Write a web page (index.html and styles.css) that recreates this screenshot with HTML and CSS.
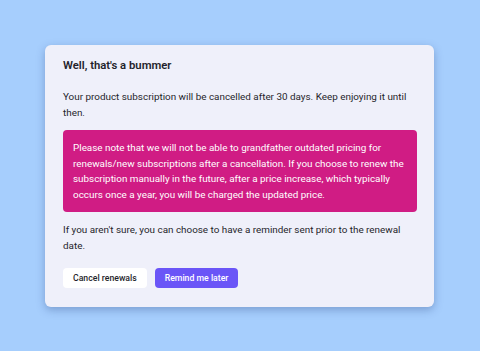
FILE: index.html
```html
<!DOCTYPE html>
<html lang="en">
<head>
  <meta charset="UTF-8" />
  <meta name="viewport" content="width=device-width, initial-scale=1.0"/>
  <title>Cancel subscription</title>
  <link rel="stylesheet" href="styles.css">
</head>
<body>
  <div class="page">
    <div class="dialog">
      <h3 class="title">Well, that's a bummer</h3>
      <p class="text">Your product subscription will be cancelled after 30 days. Keep enjoying it until then.</p>
      <div class="alert">
        Please note that we will not be able to grandfather outdated pricing for renewals/new subscriptions after a cancellation. If you choose to renew the subscription manually in the future, after a price increase, which typically occurs once a year, you will be charged the updated price.
      </div>
      <p class="text">If you aren't sure, you can choose to have a reminder sent prior to the renewal date.</p>
      <div class="actions">
        <button class="btn btn-light">Cancel renewals</button>
        <button class="btn btn-primary">Remind me later</button>
      </div>
    </div>
  </div>
</body>
</html>
```

FILE: styles.css
```css
:root {
  --bg: #a6cefd;
  --card: #eff0fa;
  --dark: #1f1f2b;
  --pink: #d01c84;
  --primary: #6a55f7;
}
* {
  margin: 0;
  padding: 0;
  box-sizing: border-box;
}
body {
  font-family: Roboto, Inter, sans-serif;
  background: var(--bg);
  color: var(--dark);
}
.page {
  width: 480px;
  height: 351px;
  padding: 45px 46px 0 45px;
}
.dialog {
  background: var(--card);
  border-radius: 6px;
  padding: 12px 17px 19px 18px;
  box-shadow: 0 3px 8px rgba(40, 70, 130, 0.35);
}
.title {
  font-size: 11.3px;
  font-weight: 600;
  line-height: 18px;
  margin-bottom: 14px;
}
.text {
  font-size: 9.9px;
  line-height: 15.5px;
}
.alert {
  background: var(--pink);
  color: #fff;
  border-radius: 4px;
  padding: 10px 10px;
  margin: 10px 0;
  font-size: 9.9px;
  line-height: 15.5px;
}
.actions {
  display: flex;
  gap: 8px;
  margin-top: 15px;
}
.btn {
  font-family: inherit;
  font-size: 8.7px;
  font-weight: 500;
  height: 20px;
  padding: 0 10px;
  border: none;
  border-radius: 4px;
  cursor: pointer;
}
.btn-light {
  background: #fff;
  color: var(--dark);
}
.btn-primary {
  background: var(--primary);
  color: #fff;
}
```
